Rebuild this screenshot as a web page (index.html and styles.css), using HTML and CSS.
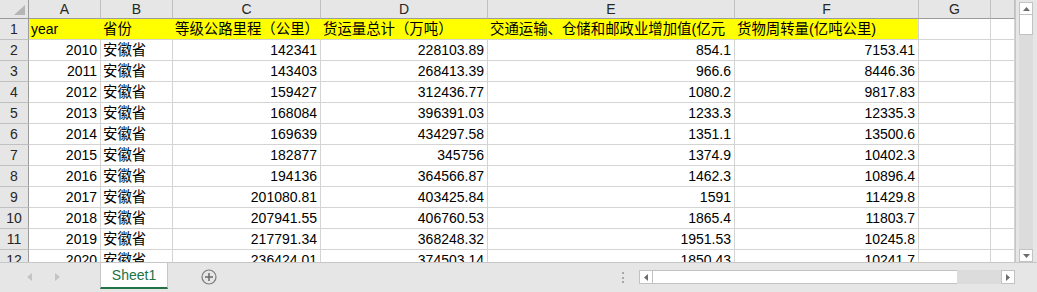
FILE: index.html
```html
<!DOCTYPE html>
<html lang="zh-CN">
<head>
  <meta charset="UTF-8">
  <title>Sheet1</title>
  <link rel="stylesheet" href="styles.css">
</head>
<body>
  <div class="app">
    <div class="main">
      <div class="sheet">
        <div class="grid">
          <div class="corner"><svg width="11" height="10"><polygon points="11,0 11,10 0,10" fill="#b5b5b5"/></svg></div>
          <div class="ch">A</div><div class="ch">B</div><div class="ch">C</div><div class="ch">D</div><div class="ch">E</div><div class="ch">F</div><div class="ch">G</div><div class="ch"></div>

          <div class="rh">1</div><div class="c y">year</div><div class="c y zh">省份</div><div class="c y zh">等级公路里程（公里）</div><div class="c y zh">货运量总计（万吨）</div><div class="c y zh">交通运输、仓储和邮政业增加值(亿元</div><div class="c y zh last">货物周转量(亿吨公里)</div><div class="c"></div><div class="c"></div>
          <div class="rh">2</div><div class="c n">2010</div><div class="c zh">安徽省</div><div class="c n">142341</div><div class="c n">228103.89</div><div class="c n">854.1</div><div class="c n">7153.41</div><div class="c"></div><div class="c"></div>
          <div class="rh">3</div><div class="c n">2011</div><div class="c zh">安徽省</div><div class="c n">143403</div><div class="c n">268413.39</div><div class="c n">966.6</div><div class="c n">8446.36</div><div class="c"></div><div class="c"></div>
          <div class="rh">4</div><div class="c n">2012</div><div class="c zh">安徽省</div><div class="c n">159427</div><div class="c n">312436.77</div><div class="c n">1080.2</div><div class="c n">9817.83</div><div class="c"></div><div class="c"></div>
          <div class="rh">5</div><div class="c n">2013</div><div class="c zh">安徽省</div><div class="c n">168084</div><div class="c n">396391.03</div><div class="c n">1233.3</div><div class="c n">12335.3</div><div class="c"></div><div class="c"></div>
          <div class="rh">6</div><div class="c n">2014</div><div class="c zh">安徽省</div><div class="c n">169639</div><div class="c n">434297.58</div><div class="c n">1351.1</div><div class="c n">13500.6</div><div class="c"></div><div class="c"></div>
          <div class="rh">7</div><div class="c n">2015</div><div class="c zh">安徽省</div><div class="c n">182877</div><div class="c n">345756</div><div class="c n">1374.9</div><div class="c n">10402.3</div><div class="c"></div><div class="c"></div>
          <div class="rh">8</div><div class="c n">2016</div><div class="c zh">安徽省</div><div class="c n">194136</div><div class="c n">364566.87</div><div class="c n">1462.3</div><div class="c n">10896.4</div><div class="c"></div><div class="c"></div>
          <div class="rh">9</div><div class="c n">2017</div><div class="c zh">安徽省</div><div class="c n">201080.81</div><div class="c n">403425.84</div><div class="c n">1591</div><div class="c n">11429.8</div><div class="c"></div><div class="c"></div>
          <div class="rh">10</div><div class="c n">2018</div><div class="c zh">安徽省</div><div class="c n">207941.55</div><div class="c n">406760.53</div><div class="c n">1865.4</div><div class="c n">11803.7</div><div class="c"></div><div class="c"></div>
          <div class="rh">11</div><div class="c n">2019</div><div class="c zh">安徽省</div><div class="c n">217791.34</div><div class="c n">368248.32</div><div class="c n">1951.53</div><div class="c n">10245.8</div><div class="c"></div><div class="c"></div>
          <div class="rh">12</div><div class="c n">2020</div><div class="c zh">安徽省</div><div class="c n">236424.01</div><div class="c n">374503.14</div><div class="c n">1850.43</div><div class="c n">10241.7</div><div class="c"></div><div class="c"></div>
        </div>
      </div>

      <div class="vscroll">
        <div class="sbtn"><svg width="7" height="4"><polygon points="0,4 7,4 3.5,0" fill="#6d6d6d"/></svg></div>
        <div class="vthumb"></div>
        <div class="vtrack"></div>
        <div class="sbtn"><svg width="7" height="4"><polygon points="0,0 7,0 3.5,4" fill="#6d6d6d"/></svg></div>
      </div>
    </div>

    <div class="tabbar">
      <div class="nav">
        <svg width="5" height="8"><polygon points="5,0 5,8 0,4" fill="#c4c4c4"/></svg>
        <svg width="5" height="8"><polygon points="0,0 0,8 5,4" fill="#c4c4c4"/></svg>
      </div>
      <div class="tab">Sheet1</div>
      <div class="add">
        <svg width="16" height="16"><circle cx="8" cy="8" r="7" fill="none" stroke="#7a7a7a" stroke-width="1.2"/><path d="M8 4v8M4 8h8" stroke="#6a6a6a" stroke-width="1.5"/></svg>
      </div>
      <div class="splitter"></div>
      <div class="hscroll">
        <div class="sbtn"><svg width="4" height="7"><polygon points="4,0 4,7 0,3.5" fill="#6d6d6d"/></svg></div>
        <div class="hthumb"></div>
        <div class="htrack"></div>
        <div class="sbtn"><svg width="4" height="7"><polygon points="0,0 0,7 4,3.5" fill="#6d6d6d"/></svg></div>
      </div>
    </div>
  </div>
</body>
</html>
```

FILE: styles.css
```css
body {
  margin: 0;
  font-family: "Liberation Sans", "Noto Sans CJK SC", sans-serif;
  font-size: 14px;
  background-color: #e6e6e6;
  overflow: hidden;
}
.app {
  width: 1037px;
  height: 292px;
  display: flex;
  flex-direction: column;
}
.main {
  display: flex;
  height: 263px;
  border-bottom: 1px solid #c6c6c6;
  box-sizing: border-box;
}
.sheet {
  width: 1016px;
  overflow: hidden;
  background-color: #fff;
  border-right: 1px solid #c6c6c6;
  box-sizing: border-box;
}
.grid {
  display: grid;
  grid-template-columns: 29px 72px 72px 148px 167px 247px 184px 72px 1fr;
  grid-template-rows: 19px repeat(12, 21px);
}
.grid > div {
  box-sizing: border-box;
  border-right: 1px solid #d4d4d4;
  border-bottom: 1px solid #d4d4d4;
  overflow: hidden;
  white-space: nowrap;
  line-height: 20px;
  padding: 0 2px;
  color: #000;
}
.grid > .corner {
  display: flex;
  justify-content: flex-end;
  align-items: flex-end;
  padding: 0 3px 3px 0;
  background-color: #e6e6e6;
  border-right-color: #9b9b9b;
  border-bottom-color: #9b9b9b;
}
.grid > .ch {
  background-color: #e6e6e6;
  border-right-color: #c0c0c0;
  border-bottom-color: #9b9b9b;
  text-align: center;
  line-height: 18px;
  color: #262626;
}
.grid > .rh {
  background-color: #e6e6e6;
  border-right-color: #9b9b9b;
  border-bottom-color: #c0c0c0;
  text-align: center;
  color: #262626;
}
.grid > .y {
  background-color: #ffff00;
  border-right-color: #ffff00;
}
.grid > .y.last {
  border-right-color: #d4d4d4;
}
.grid > .n {
  text-align: right;
  padding-right: 3px;
}
.zh {
  font-size: 14.4px;
}
.vscroll {
  width: 21px;
  display: flex;
  flex-direction: column;
  padding: 2px 4px 0 3px;
  box-sizing: border-box;
}
.sbtn {
  width: 14px;
  height: 13px;
  box-sizing: border-box;
  background-color: #fff;
  border: 1px solid #c2c2c2;
  display: flex;
  align-items: center;
  justify-content: center;
  flex-shrink: 0;
}
.vthumb {
  height: 19px;
  background-color: #fff;
  border: 1px solid #c2c2c2;
  border-top: none;
}
.vtrack {
  flex: 1;
  background-color: #dcdcdc;
}
.tabbar {
  flex: 1;
  display: flex;
  align-items: flex-start;
}
.nav {
  width: 100px;
  height: 28px;
  display: flex;
  align-items: center;
  gap: 23px;
  padding-left: 27px;
  box-sizing: border-box;
}
.tab {
  width: 68px;
  height: 26px;
  box-sizing: border-box;
  background-color: #fff;
  border-left: 1px solid #c6c6c6;
  border-right: 1px solid #c6c6c6;
  border-bottom: 2px solid #217346;
  color: #217346;
  text-align: center;
  line-height: 25px;
  font-size: 14px;
}
.add {
  margin-left: 33px;
  margin-top: 6px;
  width: 16px;
  height: 16px;
}
.add svg {
  display: block;
}
.splitter {
  margin-left: auto;
  margin-right: 15px;
  margin-top: 9px;
  width: 0;
  height: 11px;
  border-left: 2px dotted #a8a8a8;
}
.hscroll {
  width: 376px;
  height: 14px;
  margin-top: 7px;
  margin-right: 22px;
  display: flex;
  box-sizing: border-box;
}
.hscroll .sbtn {
  width: 14px;
  height: 14px;
}
.hthumb {
  width: 304px;
  background-color: #fff;
  border-top: 1px solid #c2c2c2;
  border-bottom: 1px solid #c2c2c2;
}
.htrack {
  flex: 1;
  background-color: #dcdcdc;
}
```
